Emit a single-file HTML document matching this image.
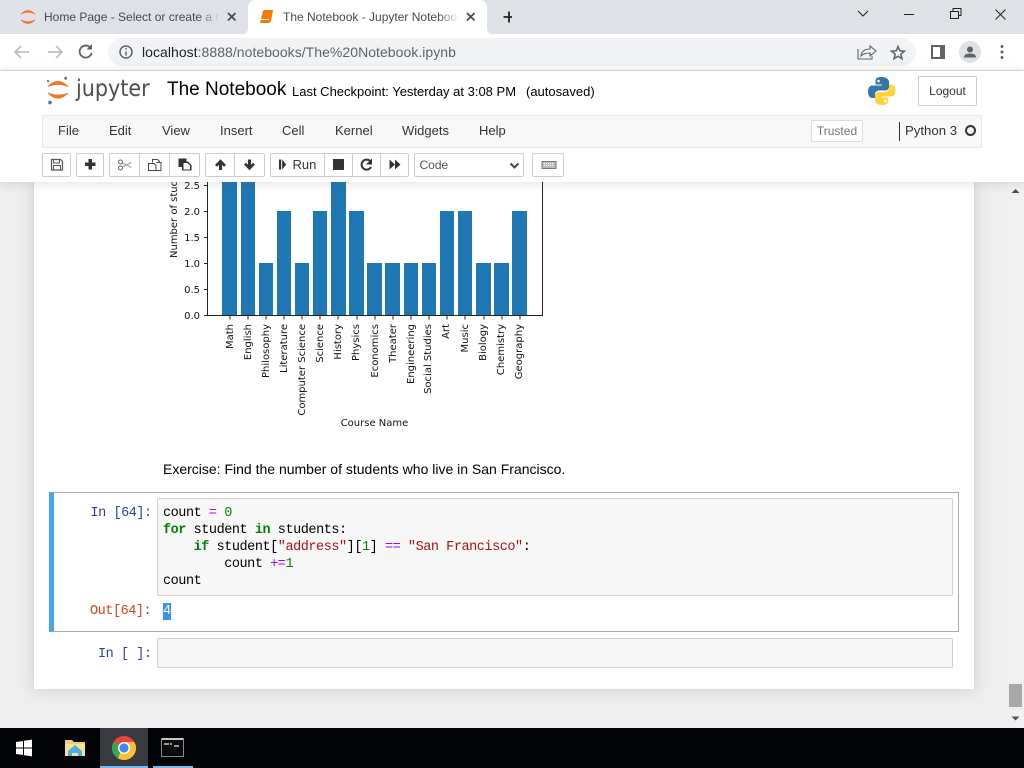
<!DOCTYPE html>
<html><head><meta charset="utf-8"><title>The Notebook - Jupyter Notebook</title>
<style>
html,body{margin:0;padding:0;width:1024px;height:768px;overflow:hidden;background:#eee;font-family:"Liberation Sans",sans-serif}
.a{position:absolute;white-space:nowrap}
#chrome{left:0;top:0;width:1024px;height:34px;background:#dee1e6}
.tab{font-size:12px;color:#45494e;top:10px}
.m{font-family:"Liberation Mono","DejaVu Sans Mono",monospace;font-size:13.5px;letter-spacing:-.45px;line-height:17px;white-space:pre}
.menu{font-size:13px;color:#333;top:123px}
.btn{position:absolute;top:153px;height:22px;background:#fff;border:1px solid #ccc;border-radius:2px;box-sizing:content-box}
.sep{position:absolute;top:153px;width:1px;height:24px;background:#ccc}
.kw{color:#008000;font-weight:bold}.op{color:#a0f}.num{color:#080}.str{color:#a11}
</style></head><body>
<div class="a" id="chrome"></div>
<!-- tab -->
<svg class="a" style="left:0;top:0" width="512" height="34">
<path d="M242 34q6 0 6-6V8q0-8 8-8h223q8 0 8 8v20q0 6 6 6z" fill="#fff"/>
<path d="M21 14q7-7 14 0q-7-3.500-14 0z" fill="#f37726" stroke="#f37726" stroke-width=".8"/><path d="M21 20q7 7 14 0q-7 3.500-14 0z" fill="#f37726" stroke="#f37726" stroke-width=".8"/>
<path d="M263 11l1-1h9l-2 11-2 2h-9l1-4z" fill="#f57c00"/><path d="M261 19.500h8" stroke="#fff" stroke-width="1"/>
<path d="M228 13l7.500 7.500M235.500 13l-7.500 7.500M467 13l7.500 7.500M474.500 13l-7.500 7.500" stroke="#45494e" stroke-width="1.700"/>
<path d="M503.500 17h11M509 11.500v11" stroke="#222" stroke-width="1.800"/>
</svg>
<div class="a tab" style="left:44px;width:177px;overflow:hidden;-webkit-mask-image:linear-gradient(90deg,#000 155px,transparent 176px)">Home Page - Select or create a notebook</div>
<div class="a tab" style="left:283px;width:176px;overflow:hidden;-webkit-mask-image:linear-gradient(90deg,#000 155px,transparent 176px)">The Notebook - Jupyter Notebook</div>
<svg class="a" style="left:850px;top:0" width="174" height="30" fill="none" stroke="#222" stroke-width="1">
<path d="M8 11l5 5 5-5"/><path d="M54 14.500h10"/><path d="M100.500 11.500h8v7h-8zM103 11v-2.500h8v7h-2.500"/><path d="M145.500 9.500l10 10M155.500 9.500l-10 10"/></svg>
<!-- address bar -->
<div class="a" style="left:0;top:34px;width:1024px;height:36px;background:#fff;border-bottom:1px solid #dadce0"></div>
<div class="a" style="left:108px;top:38px;width:808px;height:28px;border-radius:14px;background:#f1f3f4"></div>
<svg class="a" style="left:0;top:34px" width="140" height="36" fill="none">
<path d="M29 18H16M21 12l-6 6 6 6" stroke="#bcbfc2" stroke-width="1.800"/><path d="M48 18h13M56 12l6 6-6 6" stroke="#bcbfc2" stroke-width="1.800"/>
<path d="M90.500 14a6 6 0 1 0 1 5" stroke="#5f6368" stroke-width="1.800"/><path d="M92 10v5.500h-5.500z" fill="#5f6368"/>
<circle cx="126" cy="18" r="6" stroke="#5f6368" stroke-width="1.500"/><path d="M126 17.500v4M126 14v1.500" stroke="#5f6368" stroke-width="1.500"/></svg>
<div class="a" style="left:142px;top:44px;font-size:14px;letter-spacing:.04px;color:#5f6368"><span style="color:#202124">localhost</span>:8888/notebooks/The%20Notebook.ipynb</div>
<svg class="a" style="left:850px;top:34px" width="174" height="36" fill="none">
<path d="M8 15v10h14v-3" stroke="#5f6368" stroke-width="1.100"/><path d="M11 22q1-7 9-7v-3l6 5-6 5v-3q-6 0-9 3z" stroke="#5f6368" stroke-width="1.100"/>
<path d="M48 12.500l1.700 4.300 4.800.4-3.700 3 1.200 4.600-4-2.500-4 2.500 1.200-4.600-3.700-3 4.800-.4z" stroke="#5f6368" stroke-width="1.500"/>
<path d="M81 11h14v14h-14z" fill="#5f6368"/><path d="M83 13h7v10h-7z" fill="#fff"/>
<circle cx="120" cy="18" r="11" fill="#dfe1e5"/><circle cx="120" cy="15.500" r="3" fill="#5f6368"/><path d="M114 23.500q0-4 6-4t6 4z" fill="#5f6368"/>
<circle cx="152" cy="12.500" r="1.500" fill="#5f6368"/><circle cx="152" cy="18" r="1.500" fill="#5f6368"/><circle cx="152" cy="23.500" r="1.500" fill="#5f6368"/></svg>
<!-- notebook background -->
<div class="a" style="left:34px;top:182px;width:940px;height:507px;background:#fff;box-shadow:0 0 12px 1px rgba(87,87,87,.2)"></div>
<!-- chart -->
<svg class="a" style="left:150px;top:175px;font-family:'DejaVu Sans',sans-serif;font-size:10px;fill:#111" width="400" height="260">
<g fill="#1f77b4">
<rect x="72" y="0" width="15" height="140"/><rect x="91" y="0" width="14" height="140"/><rect x="109" y="88" width="14" height="52"/><rect x="127" y="36" width="14" height="104"/><rect x="145" y="88" width="14" height="52"/><rect x="163" y="36" width="14" height="104"/><rect x="181" y="0" width="15" height="140"/><rect x="199" y="36" width="15" height="104"/><rect x="217" y="88" width="15" height="52"/><rect x="235" y="88" width="15" height="52"/><rect x="254" y="88" width="14" height="52"/><rect x="272" y="88" width="14" height="52"/><rect x="290" y="36" width="14" height="104"/><rect x="308" y="36" width="14" height="104"/><rect x="326" y="88" width="15" height="52"/><rect x="344" y="88" width="15" height="52"/><rect x="362" y="36" width="15" height="104"/>
</g>
<path d="M57.500 0V140.500H392.500V0" fill="none" stroke="#222" stroke-width="1"/>
<path d="M54 140.500h3.500M54 114.500h3.500M54 88.500h3.500M54 62.500h3.500M54 36.500h3.500M54 10.500h3.500M80 141v3.500M98 141v3.500M116 141v3.500M134 141v3.500M152 141v3.500M170 141v3.500M188 141v3.500M207 141v3.500M225 141v3.500M243 141v3.500M261 141v3.500M279 141v3.500M297 141v3.500M315 141v3.500M334 141v3.500M352 141v3.500M370 141v3.500" stroke="#222" stroke-width="1"/>
<g text-anchor="end"><text x="50" y="144">0.0</text><text x="50" y="118">0.5</text><text x="50" y="92">1.0</text><text x="50" y="66">1.5</text><text x="50" y="40">2.0</text><text x="50" y="14">2.5</text></g>
<g text-anchor="end">
<text transform="translate(83,149) rotate(-90)">Math</text><text transform="translate(101,149) rotate(-90)">English</text><text transform="translate(119,149) rotate(-90)">Philosophy</text><text transform="translate(137,149) rotate(-90)">Literature</text><text transform="translate(155,149) rotate(-90)">Computer Science</text><text transform="translate(173,149) rotate(-90)">Science</text><text transform="translate(191,149) rotate(-90)">History</text><text transform="translate(209,149) rotate(-90)">Physics</text><text transform="translate(228,149) rotate(-90)">Economics</text><text transform="translate(246,149) rotate(-90)">Theater</text><text transform="translate(264,149) rotate(-90)">Engineering</text><text transform="translate(281,149) rotate(-90)">Social Studies</text><text transform="translate(299,149) rotate(-90)">Art</text><text transform="translate(318,149) rotate(-90)">Music</text><text transform="translate(336,149) rotate(-90)">Biology</text><text transform="translate(354,149) rotate(-90)">Chemistry</text><text transform="translate(372,149) rotate(-90)">Geography</text>
</g>
<text x="224.500" y="251" text-anchor="middle">Course Name</text>
<text transform="translate(27,83) rotate(-90)">Number of students</text>
</svg>
<div class="a" style="left:163px;top:461px;font-size:14px;color:#000">Exercise: Find the number of students who live in San Francisco.</div>
<!-- selected cell -->
<div class="a" style="left:49px;top:492px;width:910px;height:140px;box-sizing:border-box;border:1px solid #ababab;border-left:5px solid #42a5f5"></div>
<div class="a" style="left:157px;top:498px;width:796px;height:98px;box-sizing:border-box;background:#f7f7f7;border:1px solid #cfcfcf;border-radius:2px"></div>
<div class="a m" style="left:90.500px;top:505px;color:#303f9f">In [64]:</div>
<div class="a m" style="left:163px;top:505px;color:#000">count <span class="op">=</span> <span class="num">0</span>
<span class="kw">for</span> student <span class="kw">in</span> students:
    <span class="kw">if</span> student[<span class="str">"address"</span>][<span class="num">1</span>] <span class="op">==</span> <span class="str">"San Francisco"</span>:
        count <span class="op">+=</span><span class="num">1</span>
count</div>
<div class="a m" style="left:90px;top:603px;color:#d84315">Out[64]:</div>
<div class="a m" style="left:163px;top:603px;background:#3390ff;color:#fff;width:8px;height:17px">4</div>
<div class="a m" style="left:98px;top:646px;color:#303f9f">In [ ]:</div>
<div class="a" style="left:157px;top:638px;width:796px;height:30px;box-sizing:border-box;background:#f7f7f7;border:1px solid #cfcfcf;border-radius:2px"></div>
<!-- scrollbar -->
<div class="a" style="left:1007px;top:182px;width:17px;height:546px;background:#f0f0f0"></div>
<div class="a" style="left:1009px;top:684px;width:13px;height:23px;background:#a8a8a8"></div>
<svg class="a" style="left:1007px;top:182px" width="17" height="546"><path d="M4.500 11l4-4 4 4z" fill="#505050"/><path d="M4.500 534.500l4 4 4-4z" fill="#505050"/></svg>
<!-- header -->
<div class="a" style="left:0;top:71px;width:1024px;height:111px;background:#fff;box-shadow:0 1px 10px rgba(87,87,87,.2)"></div>
<svg class="a" style="left:44px;top:74px" width="32" height="34">
<path d="M4 12.500Q14 2 24 12.500Q14 8.500 4 12.500z" fill="#f37726" stroke="#f37726" stroke-width=".7"/>
<path d="M4 19Q14 29.500 24 19Q14 23 4 19z" fill="#f37726" stroke="#f37726" stroke-width=".7"/>
<circle cx="21.700" cy="4.300" r="1.500" fill="#767677"/><circle cx="4" cy="7" r="1.100" fill="#767677"/><circle cx="6" cy="28.500" r="1.900" fill="#767677"/></svg>
<div class="a" style="left:76px;top:75px;font-family:'DejaVu Sans',sans-serif;font-size:23px;line-height:28px;color:#4e4e4e;transform:scaleX(.9);transform-origin:left top">jupyter</div>
<div class="a" style="left:167px;top:78px;font-size:19px;line-height:24px;color:#000">The Notebook</div>
<div class="a" style="left:292px;top:84px;font-size:13px;line-height:16px;color:#000">Last Checkpoint: Yesterday at 3:08 PM</div>
<div class="a" style="left:526px;top:84px;font-size:13px;line-height:16px;color:#000">(autosaved)</div>
<svg class="a" style="left:868px;top:77px" width="28" height="29">
<path d="M13.500 0c-6 0-6 2.500-6 5v2.500h6.500v1H4.500C1.500 8.500 0 11 0 14.500S1.500 21 4 21h3v-3.500c0-2.500 2-4 4.500-4h6c2 0 3.500-1.500 3.500-3.500V5c0-2.500-2.500-5-7.500-5z" fill="#3776ab"/>
<path d="M14 28c6 0 6-2.500 6-5v-2.500h-6.500v-1H23c3 0 4.500-2.500 4.500-6S26 7.500 23.500 7.500h-2.500V11c0 2.500-2 4-4.500 4h-6c-2 0-3.500 1.500-3.500 3.500V23c0 2.500 2.500 5 7 5z" fill="#ffd43b"/>
<circle cx="10.500" cy="4" r="1.300" fill="#fff"/><circle cx="17.500" cy="24" r="1.300" fill="#fff"/></svg>
<div class="a" style="left:918px;top:76px;width:59px;height:30px;box-sizing:border-box;border:1px solid #ccc;border-radius:2px;background:#fff;text-align:center;font-size:12px;line-height:28px;color:#333">Logout</div>
<!-- menu bar -->
<div class="a" style="left:42px;top:115px;width:940px;height:33px;box-sizing:border-box;background:#f8f8f8;border:1px solid #e7e7e7;border-radius:2px"></div>
<div class="a menu" style="left:58px">File</div><div class="a menu" style="left:109px">Edit</div><div class="a menu" style="left:162px">View</div><div class="a menu" style="left:220px">Insert</div><div class="a menu" style="left:282px">Cell</div><div class="a menu" style="left:335px">Kernel</div><div class="a menu" style="left:402px">Widgets</div><div class="a menu" style="left:479px">Help</div>
<div class="a" style="left:811px;top:120px;width:52px;height:22px;box-sizing:border-box;border:1px solid #ddd;border-radius:2px;background:#fff;text-align:center;font-size:12px;line-height:20px;color:#777">Trusted</div>
<div class="a" style="left:899px;top:122px;width:1px;height:19px;background:#333"></div>
<div class="a" style="left:905px;top:123px;font-size:13.200px;color:#333">Python 3</div>
<div class="a" style="left:965px;top:125px;width:11px;height:11px;box-sizing:border-box;border:2px solid #333;border-radius:50%"></div>
<!-- toolbar -->
<div class="btn" style="left:42px;width:27px"></div>
<div class="btn" style="left:76px;width:26px"></div>
<div class="btn" style="left:109px;width:89px"></div><div class="sep" style="left:139px"></div><div class="sep" style="left:169px"></div>
<div class="btn" style="left:205px;width:58px"></div><div class="sep" style="left:234px"></div>
<div class="btn" style="left:270px;width:137px"></div><div class="sep" style="left:324px"></div><div class="sep" style="left:352px"></div><div class="sep" style="left:380px"></div>
<div class="a" style="left:414px;top:153px;width:110px;height:24px;box-sizing:border-box;background:#fff;border:1px solid #ccc;border-radius:2px;font-size:12px;line-height:23px;color:#555;padding-left:4.500px">Code</div>
<div class="btn" style="left:532px;width:30px"></div>
<div class="a" style="left:292.500px;top:157px;font-size:13px;line-height:16px;color:#333">Run</div>
<svg class="a" style="left:0;top:150px" width="570" height="30" fill="#333">
<path d="M51.500 9.500h9l2 2v8.500h-11z" fill="none" stroke="#555" stroke-width="1.200"/><path d="M53.500 9.500h6v3.500h-6zM53.500 15.500h7v4.500h-7z" fill="none" stroke="#555" stroke-width="1"/>
<path d="M88.500 9h3.500v3.500h3.500v3.500H92v3.500h-3.500V16H85v-3.500h3.500z"/>
<g fill="none" stroke="#666" stroke-width="1"><circle cx="120.500" cy="12" r="2"/><circle cx="120.500" cy="18" r="2"/><path d="M122.500 13l9 4.500M122.500 17l9-4.500" stroke="#999"/>
<path d="M152.500 12.500v-3h5l2 2v1M148.500 13.500h5.500l2 2v5h-7.500z" stroke="#444"/><path d="M156.500 12.500h4.500v8h-5" stroke="#444"/></g>
<path d="M178.500 8.500h8v3h1.500l3.500 3.500v5.500H182v-3.500h-3.500z"/><path d="M183.500 13h4l2.500 2.500V19.500h-6.500z" fill="#fff"/>
<path d="M215 15l5.500-5.700 5.500 5.700-2 1.800-2-2V20h-3v-5.200l-2 2zM244 14.500l5.500 5.700 5.500-5.700-2-1.800-2 2V9.500h-3v5.200l-2-2z"/>
<path d="M279 9.500h2.200v10H279zM282.200 9.500l4 5-4 5z"/><rect x="333" y="9" width="11" height="11"/>
<path d="M370.500 11.500A5 5 0 1 0 371 17" fill="none" stroke="#333" stroke-width="2"/><path d="M372 8.500v6h-6z"/>
<path d="M389.500 9.500l5.500 5-5.500 5zM395 9.500l5.500 5-5.500 5z"/>
<path d="M510.500 13.500l4 4 4-4" fill="none" stroke="#444" stroke-width="2"/>
<rect x="542" y="11.500" width="14" height="7" fill="#bbb" stroke="#777" stroke-width="1"/><path d="M544 13.500h10M544 15.500h10" stroke="#fff" stroke-width="1" stroke-dasharray="1 1"/>
</svg>
<!-- taskbar -->
<div class="a" style="left:0;top:728px;width:1024px;height:40px;background:#020408"></div>
<div class="a" style="left:100px;top:728px;width:48px;height:40px;background:#383a40"></div>
<div class="a" style="left:100px;top:766px;width:48px;height:2px;background:#76b9ed"></div>
<div class="a" style="left:153px;top:766px;width:40px;height:2px;background:#76b9ed"></div>
<svg class="a" style="left:0;top:728px" width="220" height="40">
<path d="M16 14l7-1v6.500h-7zM24 12.800l8-1.200v7.900h-8zM16 20.500h7V27l-7-1zM24 20.500h8v7.900l-8-1.200z" fill="#fff"/>
<path d="M65 12h7l2 2h11v14H65z" fill="#f2cf72"/><path d="M65 16h20v12H65z" fill="#fde08c"/><path d="M68 28v-5l7-6 7 6v5h-4v-3h-6v3z" fill="#4aaee8"/>
<circle cx="124" cy="20" r="12" fill="#e8453c"/><path d="M124 20l-6 10.400A12 12 0 0 1 113.600 14z" fill="#34a853"/><path d="M124 14h10.400A12 12 0 0 1 118 30.400z" fill="#fbc02d"/><circle cx="124" cy="20" r="6" fill="#fff"/><circle cx="124" cy="20" r="4.600" fill="#4285f4"/>
<rect x="161.500" y="10.500" width="22" height="18" fill="#0a0a0a" stroke="#8a8a8a"/><rect x="162" y="10" width="21" height="2" fill="#c8c8c8"/><path d="M164 16h5M170 16h2M174 18h5" stroke="#ccc" stroke-width="1.500"/>
</svg>
</body></html>
